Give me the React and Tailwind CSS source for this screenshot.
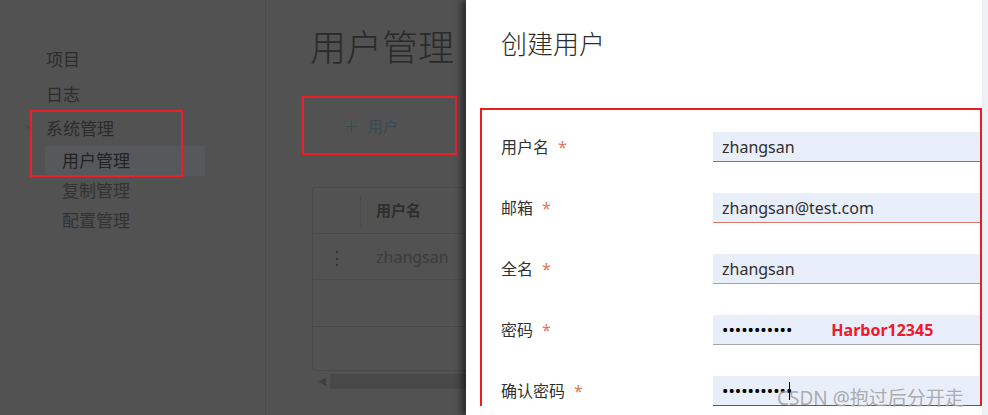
import { ChevronDown, Plus } from 'lucide-react';

const fields = [
    { label: '用户名', value: 'zhangsan', line: 'border-b-[#e4474b]' },
    { label: '邮箱', value: 'zhangsan@test.com', line: 'border-b-[#e0786c]' },
    { label: '全名', value: 'zhangsan', line: 'border-b-[#a3a7ad]' },
    { label: '密码', dots: true, note: 'Harbor12345', line: 'border-b-[#a3a7ad]' },
    { label: '确认密码', dots: true, cursor: true, line: 'border-b-[#0079b8]' },
];

function Sidebar() {
    return (
        <aside className="relative w-[266px] shrink-0 border-r border-[#4a4a4a] pt-[42px] text-[17px] text-[#2c2c2c]">
            <div className="flex h-[36px] items-center pl-[46px]">项目</div>
            <div className="flex h-[34px] items-center pl-[46px]">日志</div>
            <div className="flex h-[34px] items-center pl-[23px]">
                <ChevronDown size={12} strokeWidth={1.5} className="mr-[11px] mb-[4px] text-[#383838]" />
                <span>系统管理</span>
            </div>
            <div className="ml-[45px] flex h-[30px] w-[160px] items-center bg-[#56585b] pl-[17px] text-[#232323]">用户管理</div>
            <div className="ml-[45px] flex h-[30px] items-center pl-[17px] text-[#333]">复制管理</div>
            <div className="ml-[45px] flex h-[30px] items-center pl-[17px] text-[#333]">配置管理</div>
            {/* annotation */}
            <div className="absolute left-[30px] top-[110px] h-[67px] w-[153px] border-[2.5px] border-[#e8202a]" />
        </aside>
    );
}

function Main() {
    return (
        <main className="relative flex-1 pl-[44px] pt-[24px]">
            <h1 className="text-[36px] leading-[48px] font-light text-[#2a2a2a]">用户管理</h1>
            <div className="ml-[32px] mt-[38px] flex h-[32px] items-center gap-[7px] text-[15px] text-[#3a4a52]">
                <Plus size={19} strokeWidth={1.2} />
                <span>用户</span>
            </div>
            <div className="absolute left-[36px] top-[96px] h-[59px] w-[155px] border-[2.5px] border-[#e8202a]" />

            <div className="ml-[2px] mt-[45px] w-[260px] rounded-[3px] border border-[#494949]">
                <div className="flex h-[46px] items-center border-b border-[#494949]">
                    <div className="h-[30px] w-[48px] border-r border-[#4a4a4a]" />
                    <span className="pl-[15px] text-[15px] font-bold text-[#2e2e2e]">用户名</span>
                </div>
                <div className="flex h-[46px] items-center border-b border-[#4b4b4b]">
                    <span className="w-[48px] text-center text-[18px] leading-none text-[#333]">⋮</span>
                    <span className="pl-[15px] text-[16px] text-[#3c3c3c]">zhangsan</span>
                </div>
                <div className="h-[47px] border-b border-[#484848]" />
                <div className="h-[43px]" />
            </div>
            <div className="ml-[2px] mt-[3px] flex h-[15px] w-[260px] items-center">
                <span className="w-[18px] pl-[6px] text-[9px] leading-none text-[#3e3e3e]">◀</span>
                <div className="h-full flex-1 bg-[#484848]" />
            </div>
        </main>
    );
}

function Modal() {
    return (
        <div className="absolute inset-y-0 left-[466px] right-0 flex bg-white shadow-[-5px_0_6px_rgba(0,0,0,0.45)]">
            <div className="flex-1">
                <h2 className="pl-[35px] pt-[28px] text-[26px] leading-[32px] font-light text-[#2b2b2b]">创建用户</h2>
                <div className="ml-[14px] mt-[48px] border-2 border-b-0 border-[#ea1c24] pl-[19px] pt-[22px]">
                    {fields.map((f) => (
                        <div key={f.label} className="mb-[31px] flex h-[30px] items-center">
                            <div className="w-[212px] text-[16px] text-[#313131]">
                                {f.label}
                                <span className="ml-[9px] text-[#e27563]">*</span>
                            </div>
                            <div className={`flex h-[30px] flex-1 items-center border-b ${f.line} bg-[#e8eefa] pl-[9px] text-[16px] text-[#303030]`}>
                                {f.dots ? (
                                    <span className="text-[17px] leading-none text-black">•••••••••••</span>
                                ) : (
                                    f.value
                                )}
                                {f.cursor && <span className="-ml-[3px] h-[18px] w-px bg-black" />}
                                {f.note && <span className="ml-[39px] text-[16px] font-bold text-[#f0182a]">{f.note}</span>}
                            </div>
                        </div>
                    ))}
                </div>
            </div>
            <div className="w-[6px] bg-[#eef0f5]" />
            <div className="absolute left-[311px] top-[384px] text-[19px] text-[#a3a3a3]/90">CSDN @抱过后分开走</div>
        </div>
    );
}

export default function App() {
    return (
        <div className="relative flex h-[415px] w-[988px] overflow-hidden bg-[#525252] font-['Noto_Sans','Noto_Sans_CJK_SC',sans-serif]">
            <Sidebar />
            <Main />
            <Modal />
        </div>
    );
}
